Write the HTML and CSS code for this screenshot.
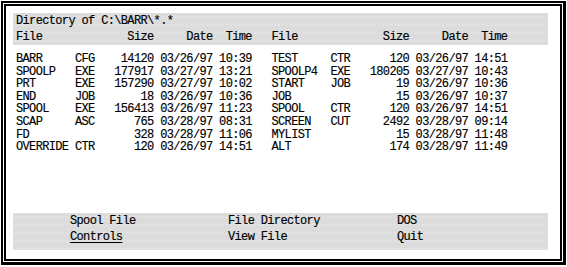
FILE: index.html
```html
<!DOCTYPE html>
<html lang="en">
  <head>
    <meta charset="UTF-8" />
    <title>Directory of C:\BARR</title>
    <link rel="stylesheet" href="styles.css">
  </head>
  <body>
    <div class="frame">
      <div class="screen">
        <!-- Header bar -->
        <pre class="bar head">Directory of C:\BARR\*.*
File             Size     Date  Time   File             Size     Date  Time</pre>

        <!-- File listing -->
        <pre class="listing">BARR     CFG    14120 03/26/97 10:39   TEST     CTR      120 03/26/97 14:51
SPOOLP   EXE   177917 03/27/97 13:21   SPOOLP4  EXE   180205 03/27/97 10:43
PRT      EXE   157290 03/27/97 10:02   START    JOB       19 03/26/97 10:36
END      JOB       18 03/26/97 10:36   JOB                15 03/26/97 10:37
SPOOL    EXE   156413 03/26/97 11:23   SPOOL    CTR      120 03/26/97 14:51
SCAP     ASC      765 03/28/97 08:31   SCREEN   CUT     2492 03/28/97 09:14
FD                328 03/28/97 11:06   MYLIST             15 03/28/97 11:48
OVERRIDE CTR      120 03/26/97 14:51   ALT               174 03/28/97 11:49</pre>

        <!-- Menu bar -->
        <div class="bar menu">
          <span>Spool File</span>
          <span>File Directory</span>
          <span>DOS</span>
          <span class="current">Controls</span>
          <span>View File</span>
          <span>Quit</span>
        </div>
      </div>
    </div>
  </body>
</html>
```

FILE: styles.css
```css
body {
  margin: 0;
  background-color: #fff;
  font-family: "Liberation Mono", "DejaVu Sans Mono", monospace;
  font-size: 12px;
  letter-spacing: -0.65px;
  color: #000;
  -webkit-text-stroke: 0.15px #000;
}
pre {
  margin: 0;
  font: inherit;
}
.frame {
  box-sizing: border-box;
  width: 565px;
  height: 264px;
  margin: 1px 0 0 1px;
  padding: 1px;
  border: 2px solid #000;
  border-width: 2px 3px 3px 2px;
}
.screen {
  box-sizing: border-box;
  height: 100%;
  border: 2px solid #000;
  padding: 7px 12px 9px 7px;
  display: flex;
  flex-direction: column;
}
.bar {
  background-color: #dcdcdc;
  background-image: radial-gradient(circle, #ebebeb 0.6px, transparent 0.8px);
  background-size: 4px 8px;
}
.head {
  padding: 1px 0 0 3px;
  line-height: 15.5px;
}
.listing {
  flex: 1;
  margin-top: 8px;
  padding-left: 3px;
  line-height: 12.6px;
}
.menu {
  display: grid;
  grid-template-columns: 158px 169px auto;
  padding: 0 0 5px 57px;
  line-height: 16px;
}
.current {
  text-decoration: underline;
  text-underline-offset: 2px;
}
```
